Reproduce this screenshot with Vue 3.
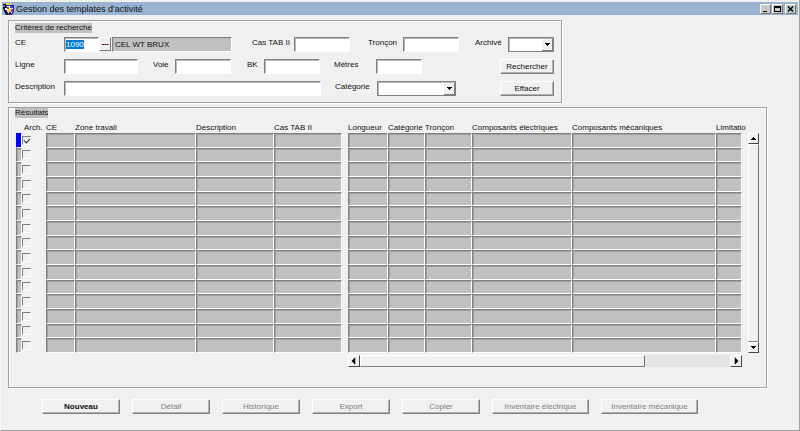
<script setup>
import { onMounted, ref } from 'vue'

const ce = ref('1090')
const ceInput = ref(null)

const leftColumns = [
  { label: 'CE', width: 29 },
  { label: 'Zone travail', width: 121 },
  { label: 'Description', width: 78 },
  { label: 'Cas TAB II', width: 68 },
]
const rightColumns = [
  { label: 'Longueur', width: 40 },
  { label: 'Catégorie', width: 37 },
  { label: 'Tronçon', width: 47 },
  { label: 'Composants électriques', width: 100 },
  { label: 'Composants mécaniques', width: 144 },
  { label: 'Limitatio', width: 26 },
]
const rows = ref(Array.from({ length: 15 }, (_, i) => ({ id: i + 1, archived: i === 0 })))

const actions = [
  { label: 'Nouveau', enabled: true },
  { label: 'Détail' },
  { label: 'Historique' },
  { label: 'Export' },
  { label: 'Copier' },
  { label: 'Inventaire électrique', wide: true },
  { label: 'Inventaire mécanique', wide: true },
]

onMounted(() => {
  ceInput.value.focus()
  ceInput.value.select()
})
</script>

<template>
  <div class="window">
    <header class="titlebar">
      <svg class="app-icon" viewBox="0 0 12 12" aria-hidden="true">
        <path d="M0 1h3l1 1v4l2 6H3L1 8 0 5z" fill="#111" />
        <path d="M0 2h2v2H0z" fill="#2a8f9a" />
        <path d="M3 2h8v7l-2 3H5L3 8z" fill="#1d2a9c" />
        <path d="M4 3h6v5l-2 3H6L4 8z" fill="#fff" />
        <path d="M4 4h2v2H4z" fill="#d0203c" />
        <path d="M7 3h3v2H7z" fill="#3346d8" />
        <path d="M5 6h3v3H5z" fill="#f3dc1c" />
        <path d="M8 6h2v3H8z" fill="#b02ab8" />
        <path d="M3 0h5v2H3z" fill="#f0d640" />
        <path d="M2 5h2v2H2z" fill="#fff" />
        <path d="M6 9h2v2H6z" fill="#222" />
      </svg>
      <h1>Gestion des templates d'activité</h1>
      <div class="controls">
        <button type="button" aria-label="Réduire">
          <svg viewBox="0 0 9 8"><path d="M2 6h4v1H2z" /></svg>
        </button>
        <button type="button" aria-label="Agrandir">
          <svg viewBox="0 0 9 8"><path d="M1 1h7v6H1zM2 3v3h5V3z" fill-rule="evenodd" /></svg>
        </button>
        <button type="button" class="close" aria-label="Fermer">
          <svg viewBox="0 0 9 8"><path d="M2 1.500L7 6.500M7 1.500L2 6.500" stroke="#000" stroke-width="1.500" /></svg>
        </button>
      </div>
    </header>

    <main>
      <form class="panel search" @submit.prevent>
        <h2>Critères de recherche</h2>
        <div class="line">
          <label class="first" for="ce">CE</label>
          <input id="ce" ref="ceInput" v-model="ce" class="w-code" type="text" />
          <button class="lookup" type="button" aria-label="Liste des CE">
            <svg viewBox="0 0 10 12"><path d="M2 6h2v1H2zM4.500 6h1.500v1H4.500zM6.500 6h2v1H6.500z" fill="#400" /></svg>
          </button>
          <input class="w-name readonly" type="text" value="CEL WT BRUX" readonly aria-label="Nom du CE" />
          <label class="cas" for="cas">Cas TAB II</label>
          <input id="cas" class="w-mid" type="text" />
          <label class="troncon" for="troncon">Tronçon</label>
          <input id="troncon" class="w-mid" type="text" />
          <label class="archive" for="archive">Archivé</label>
          <select id="archive" class="w-short"><option></option></select>
        </div>
        <div class="line">
          <label class="first" for="ligne">Ligne</label>
          <input id="ligne" class="w-long" type="text" />
          <label class="voie" for="voie">Voie</label>
          <input id="voie" class="w-mid" type="text" />
          <label class="bk" for="bk">BK</label>
          <input id="bk" class="w-mid" type="text" />
          <label class="second" for="metres">Mètres</label>
          <input id="metres" class="w-short" type="text" />
          <button class="btn" type="submit">Rechercher</button>
        </div>
        <div class="line">
          <label class="first" for="description">Description</label>
          <input id="description" class="w-full" type="text" />
          <label class="second" for="categorie">Catégorie</label>
          <select id="categorie" class="w-select"><option></option></select>
          <button class="btn" type="reset">Effacer</button>
        </div>
      </form>

      <section class="panel results">
        <h2>Résultats</h2>
        <div class="grids">
          <table class="left">
            <colgroup>
              <col style="width: 6px" />
              <col style="width: 24px" />
              <col v-for="c in leftColumns" :key="c.label" :style="{ width: c.width + 'px' }" />
            </colgroup>
            <thead>
              <tr>
                <th></th>
                <th class="arch">Arch.</th>
                <th v-for="c in leftColumns" :key="c.label">{{ c.label }}</th>
              </tr>
            </thead>
            <tbody>
              <tr v-for="(r, i) in rows" :key="r.id">
                <td class="cell" :class="{ current: i === 0 }"></td>
                <td class="tick">
                  <input v-model="r.archived" type="checkbox" :aria-label="'Archivé, ligne ' + r.id" />
                </td>
                <td v-for="c in leftColumns" :key="c.label" class="cell"></td>
              </tr>
            </tbody>
          </table>

          <table class="right">
            <colgroup>
              <col v-for="c in rightColumns" :key="c.label" :style="{ width: c.width + 'px' }" />
            </colgroup>
            <thead>
              <tr>
                <th v-for="c in rightColumns" :key="c.label">{{ c.label }}</th>
              </tr>
            </thead>
            <tbody>
              <tr v-for="r in rows" :key="r.id">
                <td v-for="c in rightColumns" :key="c.label" class="cell"></td>
              </tr>
            </tbody>
          </table>

          <div class="vbar">
            <button type="button" aria-label="Monter">
              <svg viewBox="0 0 9 9"><path d="M4 3h1v1h1v1h1v1H2V5h1V4h1z" /></svg>
            </button>
            <div class="thumb"></div>
            <button type="button" aria-label="Descendre">
              <svg viewBox="0 0 9 9"><path d="M2 3h5v1H6v1H5v1H4V5H3V4H2z" /></svg>
            </button>
          </div>

          <div class="hbar">
            <button type="button" aria-label="Gauche">
              <svg viewBox="0 0 8 8"><path d="M2 4l3-3v6z" /></svg>
            </button>
            <div class="track"><div class="thumb"></div></div>
            <button type="button" aria-label="Droite">
              <svg viewBox="0 0 8 8"><path d="M6 4L3 1v6z" /></svg>
            </button>
          </div>
        </div>
      </section>
    </main>

    <footer>
      <button
        v-for="a in actions"
        :key="a.label"
        type="button"
        class="btn action"
        :class="{ wide: a.wide, strong: a.enabled }"
        :disabled="!a.enabled"
      >{{ a.label }}</button>
    </footer>
  </div>
</template>

<style>
body {
  margin: 0;
  background: #f0f0f0;
}
</style>

<style scoped>
* {
  box-sizing: border-box;
}
.window {
  min-height: 100vh;
  padding: 2px 1px 0;
  border-right: 1px solid #a0a0a0;
  border-bottom: 1px solid #a0a0a0;
  border-left: 1px solid #fafafa;
  background: #f0f0f0;
  color: #111;
  font-family: "Liberation Sans", Arial, sans-serif;
  font-size: 8px;
  line-height: 10px;
}
.titlebar {
  display: flex;
  align-items: center;
  height: 13px;
  padding: 0 2px 0 1px;
  background: #99b4d1;
}
.app-icon {
  width: 12px;
  height: 12px;
}
h1 {
  margin: 0 auto 0 1px;
  font-size: 9px;
  font-weight: 400;
  line-height: 12px;
}
.controls {
  display: flex;
  gap: 1px;
}
button,
input,
select {
  margin: 0;
  padding: 0;
  border-radius: 0;
  outline: none;
  color: #111;
  font: inherit;
}
button {
  border: 1px solid;
  border-color: #fff #777 #777 #fff;
  background: #f0f0f0;
}
button svg {
  display: block;
}
.controls button {
  width: 11px;
  height: 10px;
  background: #c8c8c8;
}
.controls .close {
  margin-left: 1px;
}
.panel {
  border: 1px solid #a0a0a0;
  box-shadow: 1px 1px 0 #fff, inset 1px 1px 0 #fff;
}
main {
  display: grid;
  gap: 4px;
  padding: 5px 32px 0 6px;
}
h2 {
  width: fit-content;
  margin: 0;
  background: #c0c0c0;
  font-size: 8px;
  font-weight: 400;
  line-height: 10px;
}
.search {
  display: grid;
  gap: 7px;
  width: fit-content;
  padding: 2px 7px 6px 6px;
}
.search h2 {
  margin-bottom: -3px;
}
.line {
  display: flex;
}
label {
  padding-top: 1px;
  white-space: nowrap;
}
.line input,
select {
  height: 15px;
  padding: 0 1px;
  border: 1px solid;
  border-color: #808080 #fff #fff #808080;
  background: #fff;
  box-shadow: inset 1px 1px 0 #b8b8b8;
}
.line .readonly {
  padding: 0 2px;
  background: #c0c0c0;
}
input::selection {
  background: #0078d7;
  color: #fff;
}
select {
  appearance: none;
  border-color: #808080;
  background:
    linear-gradient(#000, #000) right 3px top 5px / 5px 1px no-repeat,
    linear-gradient(#000, #000) right 4px top 6px / 3px 1px no-repeat,
    linear-gradient(#000, #000) right 5px top 7px / 1px 1px no-repeat,
    linear-gradient(#808080, #808080) right 0 bottom 0 / 11px 1px no-repeat,
    linear-gradient(#808080, #808080) right 0 top 0 / 1px 13px no-repeat,
    linear-gradient(#f0f0f0, #f0f0f0) right 0 top 0 / 11px 13px no-repeat,
    #fff;
}
.first { width: 49px; }
.second { width: 56px; padding-left: 14px; }
.cas { width: 62px; padding-left: 20px; }
.troncon { width: 53px; padding-left: 18px; }
.archive { width: 49px; padding-left: 16px; }
.voie { width: 37px; padding-left: 15px; }
.bk { width: 33px; padding-left: 16px; }
.w-code { width: 35px; }
.w-name { width: 120px; }
.w-mid { width: 56px; }
.w-short { width: 46px; }
.w-long { width: 74px; }
.w-full { flex: 1; }
.w-select { width: 79px; margin-right: 44px; }
.lookup {
  width: 12px;
  height: 14px;
  margin-right: 1px;
}
.btn {
  width: 54px;
  height: 15px;
  border-color: #fff #808080 #808080 #fff;
  box-shadow: inset -1px -1px 0 #b0b0b0;
}
.line .btn {
  margin-left: auto;
}
.results {
  padding: 0 7px 20px 6px;
}
.grids {
  display: grid;
  grid-template-columns: 327fr 394fr 11px;
  column-gap: 6px;
  row-gap: 2px;
  padding: 5px 0 0 1px;
}
table {
  width: 100%;
  height: 230px;
  border-spacing: 0;
  table-layout: fixed;
}
th {
  height: 10px;
  padding: 0;
  font-weight: 400;
  line-height: 10px;
  text-align: left;
  white-space: nowrap;
}
.arch {
  padding-left: 2px;
}
td {
  padding: 0;
  line-height: 0;
}
.cell {
  border: 1px solid;
  border-color: #808080 #fff #fff #808080;
  background: #c0c0c0;
  box-shadow: inset 1px 1px 0 #a0a0a0;
}
.current {
  border-color: #0000ff #fff #fff #0000ff;
  background: #0000ff;
  box-shadow: none;
}
.tick {
  vertical-align: middle;
}
.tick input {
  appearance: none;
  position: relative;
  width: 9px;
  height: 9px;
  border: 1px solid;
  border-color: #808080 #fff #fff #808080;
}
.tick input:checked::after {
  content: "";
  position: absolute;
  top: 1px;
  left: 1px;
  width: 5px;
  height: 3px;
  border: solid #333;
  border-width: 0 0 1px 1px;
  transform: rotate(-45deg);
}
.vbar {
  display: flex;
  flex-direction: column;
  margin-top: 10px;
}
.vbar button {
  width: 11px;
  height: 11px;
}
.vbar button,
.hbar button {
  border-color: #fff #444 #444 #fff;
}
.thumb {
  border: 1px solid;
  border-color: #fff #707070 #808080 #fff;
}
.vbar .thumb {
  flex: 1;
}
.hbar {
  grid-column: 2;
  display: flex;
  height: 12px;
}
.hbar button {
  width: 12px;
}
.track {
  flex: 1;
  background: #e4e4e4;
}
.hbar .thumb {
  width: 77%;
  height: 12px;
  background: #f0f0f0;
}
footer {
  display: flex;
  gap: 12px;
  padding: 11px 40px 14px;
}
.action {
  width: 78px;
}
.wide {
  width: 97px;
}
.action:disabled {
  color: #808080;
}
.strong {
  font-weight: 700;
}
</style>
